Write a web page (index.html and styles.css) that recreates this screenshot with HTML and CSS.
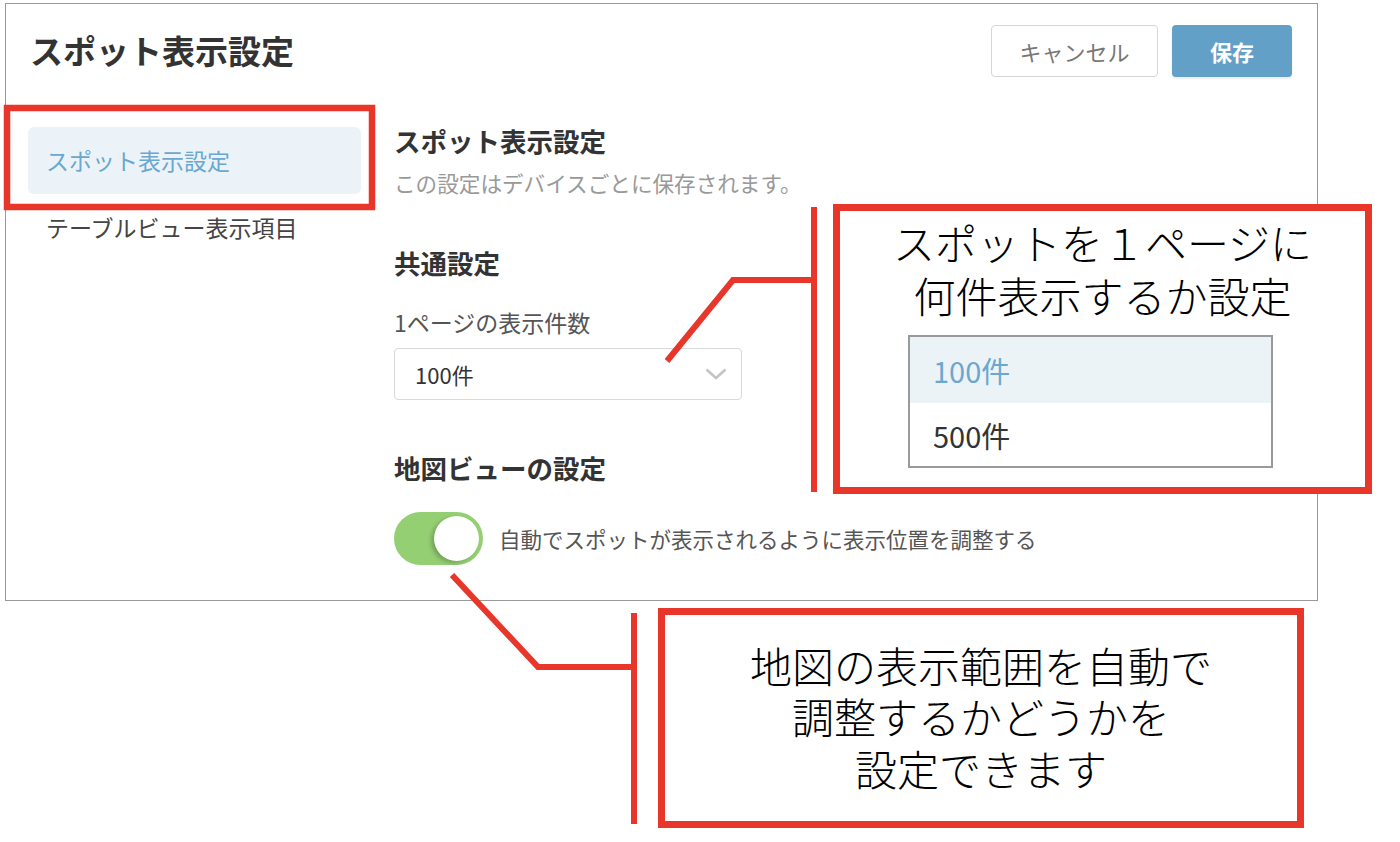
FILE: index.html
```html
<!DOCTYPE html>
<html lang="ja">
  <head>
    <meta charset="UTF-8" />
    <meta name="viewport" content="width=device-width, initial-scale=1.0" />
    <title>スポット表示設定</title>
    <link rel="stylesheet" href="styles.css">
  </head>
  <body>
    <div class="settings-panel">
      <div class="panel-header">
        <h1>スポット表示設定</h1>
        <div class="header-actions">
          <button type="button" class="btn btn-cancel">キャンセル</button>
          <button type="button" class="btn btn-save">保存</button>
        </div>
      </div>

      <div class="panel-body">
        <nav class="side-nav">
          <a class="nav-item active">スポット表示設定</a>
          <a class="nav-item">テーブルビュー表示項目</a>
        </nav>

        <div class="content">
          <h2>スポット表示設定</h2>
          <p class="note">この設定はデバイスごとに保存されます。</p>

          <h3 class="section-title">共通設定</h3>
          <label class="field-label">1ページの表示件数</label>
          <div class="select-box">
            <span>100件</span>
            <svg width="22" height="12" viewBox="0 0 22 12">
              <path d="M1.5 1.5 L11 10 L20.5 1.5" fill="none" stroke="#c4c4c4" stroke-width="2.6" />
            </svg>
          </div>

          <h3 class="section-title map-title">地図ビューの設定</h3>
          <div class="toggle-row">
            <div class="toggle">
              <div class="toggle-knob"></div>
            </div>
            <span class="toggle-label">自動でスポットが表示されるように表示位置を調整する</span>
          </div>
        </div>
      </div>
    </div>

    <!-- 注釈 -->
    <svg class="annotation-lines" width="1400" height="842" viewBox="0 0 1400 842">
      <rect x="7" y="108" width="365" height="99" fill="none" stroke="#e8362a" stroke-width="6.5" />
      <polyline points="667,361 733,280 814,280" fill="none" stroke="#e8362a" stroke-width="6" />
      <line x1="814" y1="207" x2="814" y2="492" stroke="#e8362a" stroke-width="6" />
      <polyline points="452,575 538,667 634,667" fill="none" stroke="#e8362a" stroke-width="6" />
      <line x1="634" y1="613" x2="634" y2="824" stroke="#e8362a" stroke-width="6" />
    </svg>

    <div class="callout callout-pages">
      <div class="callout-line">スポットを１ページに</div>
      <div class="callout-line">何件表示するか設定</div>
      <ul class="option-list">
        <li class="option selected">100件</li>
        <li class="option">500件</li>
      </ul>
    </div>

    <div class="callout callout-map">
      <div class="callout-line">地図の表示範囲を自動で</div>
      <div class="callout-line">調整するかどうかを</div>
      <div class="callout-line">設定できます</div>
    </div>
  </body>
</html>
```

FILE: styles.css
```css
:root {
  --text-color: #333;
  --muted-color: #999;
  --label-color: #555;
  --primary-color: #63a0c7;
  --active-bg: #ebf3f8;
  --active-text: #6aa8cf;
  --toggle-green: #95cf73;
  --mark-red: #e8362a;
  --white: #fff;
}

* {
  margin: 0;
  padding: 0;
  box-sizing: border-box;
  font-family: "Noto Sans CJK JP", "Noto Sans", sans-serif;
}

body {
  background-color: var(--white);
  color: var(--text-color);
  position: relative;
  width: 1400px;
  height: 842px;
  overflow: hidden;
}

.settings-panel {
  margin: 3px 0 0 5px;
  width: 1313px;
  height: 598px;
  border: 1px solid #999;
  background-color: var(--white);
}

.panel-header {
  display: flex;
  justify-content: space-between;
  align-items: center;
  height: 73px;
  padding: 21px 25px 0 24px;
}

.panel-header h1 {
  font-size: 33px;
  font-weight: 700;
  line-height: 46px;
  margin-top: -3px;
}

.header-actions {
  display: flex;
  gap: 14px;
}

.btn {
  height: 52px;
  border-radius: 4px;
  font-size: 22px;
  cursor: pointer;
}

.btn-cancel {
  width: 167px;
  background-color: var(--white);
  border: 1px solid #d6d6d6;
  color: #777;
}

.btn-save {
  width: 120px;
  background-color: var(--primary-color);
  border: none;
  color: var(--white);
  font-weight: 600;
  box-shadow: 0 2px 2px rgba(0, 0, 0, 0.08);
}

.panel-body {
  display: flex;
  gap: 33px;
  padding-left: 22px;
}

.side-nav {
  width: 333px;
  padding-top: 50px;
  display: flex;
  flex-direction: column;
}

.nav-item {
  height: 67px;
  display: flex;
  align-items: center;
  padding: 0 18px 2px;
  border-radius: 6px;
  font-size: 23px;
  color: #444;
}

.nav-item.active {
  background-color: var(--active-bg);
  color: var(--active-text);
}

.content {
  padding-top: 46px;
}

.content h2,
.section-title {
  font-size: 26.5px;
  font-weight: 700;
  line-height: 36px;
}

.note {
  margin-top: 9px;
  font-size: 21.6px;
  line-height: 30px;
  color: var(--muted-color);
}

.section-title {
  margin-top: 47px;
}

.field-label {
  display: block;
  margin-top: 26px;
  font-size: 23px;
  line-height: 30px;
  color: var(--label-color);
}

.select-box {
  margin-top: 11px;
  width: 348px;
  height: 52px;
  border: 1px solid #d9d9d9;
  border-radius: 4px;
  display: flex;
  align-items: center;
  justify-content: space-between;
  padding: 0 14px 0 20px;
  font-size: 22px;
  color: var(--text-color);
}

.map-title {
  margin-top: 50px;
}

.toggle-row {
  margin-top: 26px;
  display: flex;
  align-items: center;
  gap: 16px;
}

.toggle {
  width: 89px;
  height: 53px;
  border-radius: 27px;
  background-color: var(--toggle-green);
  display: flex;
  justify-content: flex-end;
  align-items: center;
  padding: 4px;
}

.toggle-knob {
  width: 45px;
  height: 45px;
  border-radius: 50%;
  background-color: var(--white);
  box-shadow: -3px 2px 4px rgba(0, 0, 0, 0.22);
}

.toggle-label {
  font-size: 21.5px;
  color: var(--label-color);
}

/* 注釈レイヤー */
.annotation-lines {
  position: absolute;
  top: 0;
  left: 0;
  z-index: 2;
  pointer-events: none;
}

.callout {
  position: absolute;
  z-index: 3;
  border: 7px solid var(--mark-red);
  background-color: var(--white);
  color: #000;
}

.callout-line {
  font-size: 42px;
  font-weight: 300;
  text-align: center;
  white-space: nowrap;
}

.callout-pages {
  left: 833px;
  top: 204px;
  width: 539px;
  height: 290px;
  padding-top: 4px;
}

.callout-pages .callout-line {
  height: 53px;
  line-height: 53px;
}

.option-list {
  list-style: none;
  margin: 14px 0 0 68px;
  width: 365px;
  border: 2px solid #9a9a9a;
}

.option {
  display: flex;
  align-items: center;
  padding-left: 23px;
  font-size: 29px;
  height: 63px;
  color: #333;
}

.option.selected {
  height: 66px;
  background-color: #ecf3f7;
  color: var(--active-text);
}

.callout-map {
  left: 658px;
  top: 608px;
  width: 646px;
  height: 220px;
  display: flex;
  flex-direction: column;
  align-items: center;
  justify-content: center;
  padding-bottom: 4px;
}

.callout-map .callout-line {
  height: 51.5px;
  line-height: 51.5px;
}
```
